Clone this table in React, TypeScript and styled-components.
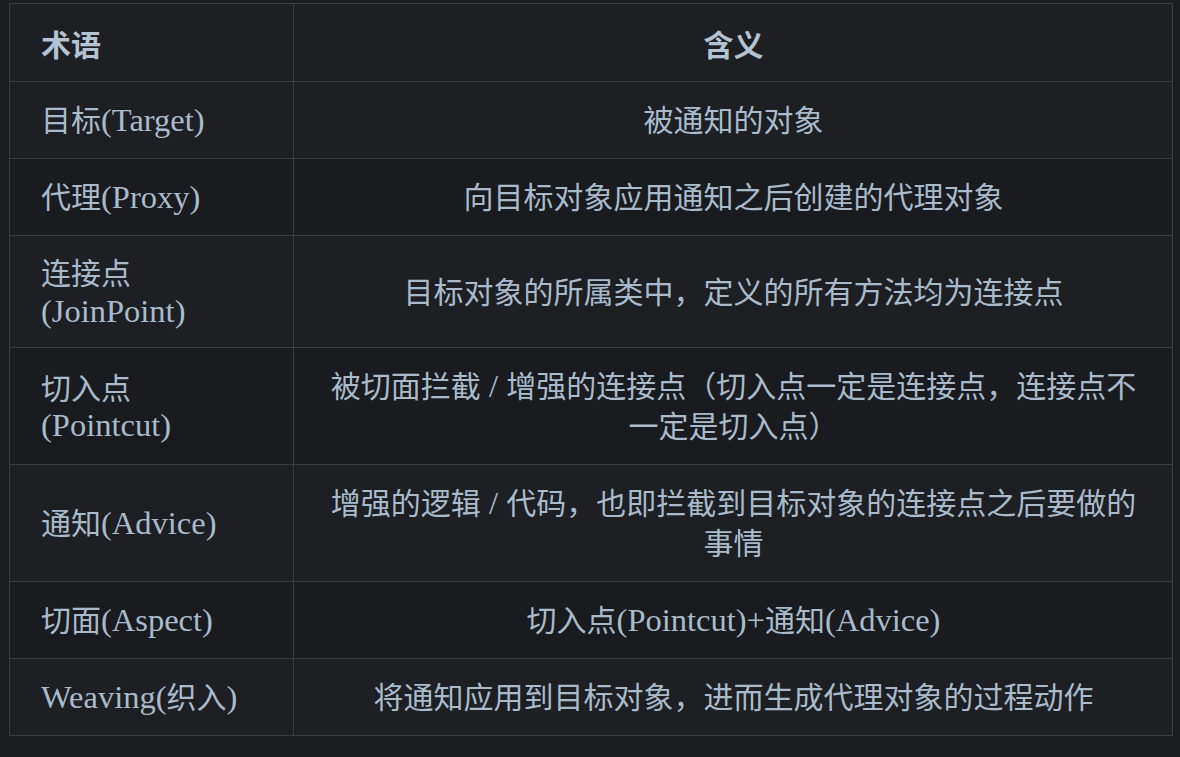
import React from "react";
import styled, { createGlobalStyle } from "styled-components";

const GlobalStyle = createGlobalStyle`
  html, body {
    margin: 0;
    padding: 0;
    background: #1b1c1f;
  }
  body {
    font-family: "Liberation Serif", "Noto Sans CJK SC", serif;
  }
`;

const Page = styled.div`
  padding: 3px 8px 19px 9px;
  background: #1b1c1f;
  min-height: 757px;
  box-sizing: border-box;
`;

const Table = styled.table`
  width: 1164px;
  border-collapse: collapse;
  table-layout: fixed;
  border: 1px solid #3c3d41;
  color: #a9bbcb;
  font-family: "Liberation Serif", "Noto Sans CJK SC", serif;
  font-size: 30px;
  line-height: 40px;
`;

const HeadCell = styled.th<{ $center?: boolean }>`
  background: #1e1f22;
  border: 1px solid #3c3d41;
  padding: 19px 30px 18px 31px;
  font-family: "Noto Sans CJK SC", sans-serif;
  font-weight: 700;
  font-size: 30px;
  color: #b3c3d1;
  text-align: ${(p) => (p.$center ? "center" : "left")};
  height: 40px;
`;

const Row = styled.tr<{ $odd: boolean }>`
  background: ${(p) => (p.$odd ? "#1e1f22" : "#1a1b1e")};
`;

const Cell = styled.td<{ $center?: boolean }>`
  border: 1px solid #3c3d41;
  padding: 19px 30px 17px 31px;
  text-align: ${(p) => (p.$center ? "center" : "left")};
  vertical-align: middle;
`;

const Line = styled.span`
  display: block;
  line-height: 37.5px;
`;

const Latin = styled.span`
  font-family: "Liberation Serif", serif;
  font-size: 32.5px;
  line-height: 20px;
`;

function Mixed({ text }: { text: string }) {
  const parts = text.split(/([\u0000-\u02FF]+)/).filter((p) => p.length > 0);
  return (
    <>
      {parts.map((p, i) =>
        /^[\u0000-\u02FF]+$/.test(p) ? <Latin key={i}>{p}</Latin> : <React.Fragment key={i}>{p}</React.Fragment>
      )}
    </>
  );
}

const rows: { term: string[]; desc: string }[] = [
  { term: ["目标(Target)"], desc: "被通知的对象" },
  { term: ["代理(Proxy)"], desc: "向目标对象应用通知之后创建的代理对象" },
  { term: ["连接点", "(JoinPoint)"], desc: "目标对象的所属类中，定义的所有方法均为连接点" },
  {
    term: ["切入点", "(Pointcut)"],
    desc: "被切面拦截 / 增强的连接点（切入点一定是连接点，连接点不一定是切入点）",
  },
  {
    term: ["通知(Advice)"],
    desc: "增强的逻辑 / 代码，也即拦截到目标对象的连接点之后要做的事情",
  },
  { term: ["切面(Aspect)"], desc: "切入点(Pointcut)+通知(Advice)" },
  { term: ["Weaving(织入)"], desc: "将通知应用到目标对象，进而生成代理对象的过程动作" },
];

export default function App() {
  return (
    <>
      <GlobalStyle />
      <Page>
        <Table>
          <colgroup>
            <col style={{ width: 284 }} />
            <col />
          </colgroup>
          <thead>
            <tr>
              <HeadCell>术语</HeadCell>
              <HeadCell $center>含义</HeadCell>
            </tr>
          </thead>
          <tbody>
            {rows.map((r, i) => (
              <Row key={i} $odd={i % 2 === 0}>
                <Cell>
                  {r.term.map((t, j) =>
                    r.term.length > 1 ? (
                      <Line key={j}>
                        <Mixed text={t} />
                      </Line>
                    ) : (
                      <Mixed key={j} text={t} />
                    )
                  )}
                </Cell>
                <Cell $center>
                  <Mixed text={r.desc} />
                </Cell>
              </Row>
            ))}
          </tbody>
        </Table>
      </Page>
    </>
  );
}
